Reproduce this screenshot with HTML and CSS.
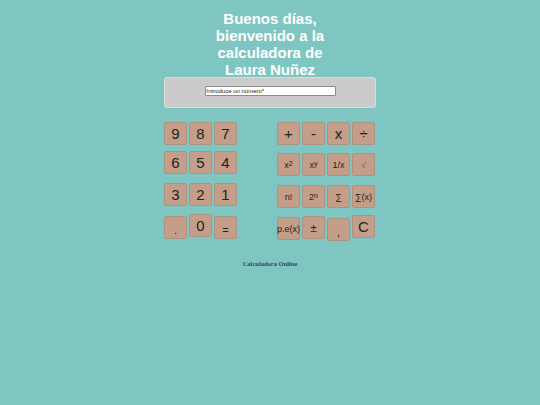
FILE: index.html
```html
<!DOCTYPE html>
<html lang="es">
<head>
<meta charset="utf-8">
<title>Calculadora</title>
<link rel="stylesheet" href="styles.css">
</head>
<body>
<h1 class="title">Buenos días, bienvenido a la calculadora de Laura Nuñez</h1>
<div class="calc">
  <div class="display">
    <div class="field">Introduce un número*</div>
  </div>
  <div class="pads">
    <div class="pad">
      <div class="row r1"><span class="key">9</span><span class="key">8</span><span class="key">7</span></div>
      <div class="row r2"><span class="key">6</span><span class="key">5</span><span class="key">4</span></div>
      <div class="row r3"><span class="key">3</span><span class="key">2</span><span class="key">1</span></div>
      <div class="row r4"><span class="key low sm">.</span><span class="key">0</span><span class="key low sm">=</span></div>
    </div>
    <div class="pad">
      <div class="row r1"><span class="key">+</span><span class="key">-</span><span class="key">x</span><span class="key">÷</span></div>
      <div class="row q2"><span class="key xs">x<sup>2</sup></span><span class="key xs">x<sup>y</sup></span><span class="key xs">1/x</span><span class="key xs light">√</span></div>
      <div class="row q3"><span class="key xs">n!</span><span class="key xs">2<sup>n</sup></span><span class="key xs">∑</span><span class="key xs">∑(x)</span></div>
      <div class="row q4"><span class="key xs low">p.e(x)</span><span class="key sm mid">±</span><span class="key sm lower">,</span><span class="key">C</span></div>
    </div>
  </div>
</div>
<p class="footer">Calculadora Online</p>
</body>
</html>
```
FILE: styles.css
```css
html, body {
  margin: 0;
  padding: 0;
}
body {
  background: #7fc6c2;
  width: 540px;
  height: 405px;
  font-family: "Liberation Sans", Arial, sans-serif;
  padding-top: 10px;
  box-sizing: border-box;
}
.title {
  margin: 0 auto;
  width: 120px;
  text-align: center;
  color: #ffffff;
  font-size: 15px;
  line-height: 17px;
  font-weight: bold;
}
.calc {
  width: 212px;
  margin: 0 auto;
}
.display {
  margin-top: -1px;
  height: 31px;
  background: #cbcbcb;
  border: 1px solid #dcdcdc;
  border-radius: 3px;
  box-sizing: border-box;
  display: flex;
  justify-content: center;
  align-items: center;
}
.field {
  width: 131px;
  height: 10px;
  margin-top: -3px;
  background: #ffffff;
  border: 1px solid #8a8a8a;
  border-radius: 1px;
  box-sizing: border-box;
  font-size: 6px;
  line-height: 8px;
  padding-left: 1px;
  color: #222;
}
.pads {
  display: flex;
  justify-content: space-between;
  margin-top: 14px;
}
.pad {
  display: flex;
  flex-direction: column;
}
.pad + .pad {
  margin-right: 1px;
}
.row {
  display: flex;
  gap: 2px;
  align-items: flex-start;
  height: 23px;
}
.r2 { margin-top: 6px; }
.r3 { margin-top: 9px; }
.r4 { margin-top: 8px; }
.q2 { margin-top: 8px; }
.q3 { margin-top: 9px; }
.q4 { margin-top: 7px; }
.key {
  width: 23px;
  height: 23px;
  box-sizing: border-box;
  background: #c49e88;
  border: 1px solid #a99484;
  border-radius: 2px;
  display: flex;
  align-items: center;
  justify-content: center;
  font-size: 15px;
  color: #222;
}
.key.sm { font-size: 11px; }
.key.xs { font-size: 9px; }
.key sup { font-size: 7px; position: relative; top: -1px; }
.key.light { color: #6e6e6e; }
.key.low { margin-top: 2px; }
.key.mid { margin-top: 1px; }
.key.lower { margin-top: 3px; padding-top: 4px; }
.key.low.sm { padding-top: 4px; }
.footer {
  margin: 22px 0 0 0;
  text-align: center;
  font-family: "Liberation Serif", "Times New Roman", serif;
  font-weight: bold;
  font-size: 6.5px;
  color: #354a4e;
}
```
